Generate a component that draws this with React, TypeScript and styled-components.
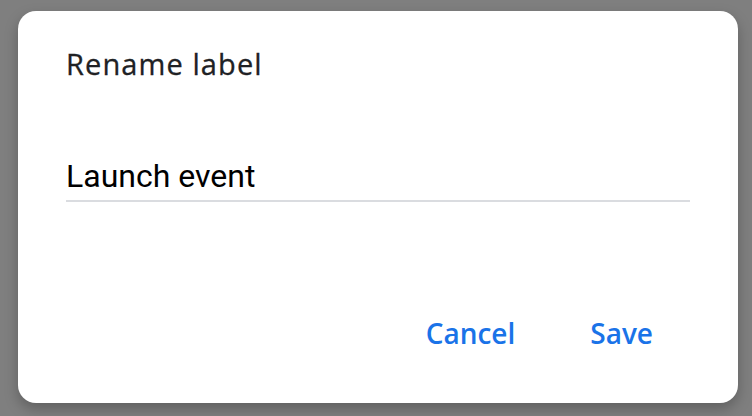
import React from 'react';
import styled, { createGlobalStyle } from 'styled-components';

const GlobalStyle = createGlobalStyle`
  html, body {
    margin: 0;
    padding: 0;
    background: #7f7f7f;
  }
  body {
    font-family: Roboto, 'Noto Sans', sans-serif;
  }
`;

const Backdrop = styled.div`
  width: 752px;
  height: 416px;
  box-sizing: border-box;
  padding: 11px 14px 13px 18px;
  display: flex;
  background: #7f7f7f;
`;

const Dialog = styled.div`
  flex: 1;
  display: flex;
  flex-direction: column;
  background: #fff;
  border-radius: 18px;
  box-shadow: 0 6px 14px rgba(0, 0, 0, 0.25);
  padding: 0 48px;
`;

const Title = styled.h2`
  margin: 37px 0 0;
  font-family: 'Open Sans', Roboto, sans-serif;
  font-size: 29px;
  font-weight: 400;
  line-height: 32px;
  letter-spacing: 1.1px;
  color: #202124;
  -webkit-text-stroke: 0.3px #202124;
`;

const Field = styled.input`
  margin-top: 78px;
  height: 36px;
  border: none;
  border-bottom: 2px solid #dadce0;
  outline: none;
  padding: 0 0 6px;
  font-family: Roboto, sans-serif;
  font-size: 32px;
  line-height: 36px;
  color: #000;
  background: transparent;
`;

const Actions = styled.div`
  margin-top: auto;
  margin-bottom: 46px;
  margin-right: 13px;
  display: flex;
  justify-content: flex-end;
  gap: 27px;
`;

const TextButton = styled.button`
  border: none;
  background: none;
  padding: 6px 24px;
  font-family: 'Open Sans', Roboto, sans-serif;
  font-size: 28px;
  font-weight: 600;
  line-height: 36px;
  color: #1a73e8;
`;

export default function App() {
  return (
    <>
      <GlobalStyle />
      <Backdrop>
        <Dialog>
          <Title>Rename label</Title>
          <Field defaultValue="Launch event" />
          <Actions>
            <TextButton>Cancel</TextButton>
            <TextButton>Save</TextButton>
          </Actions>
        </Dialog>
      </Backdrop>
    </>
  );
}
